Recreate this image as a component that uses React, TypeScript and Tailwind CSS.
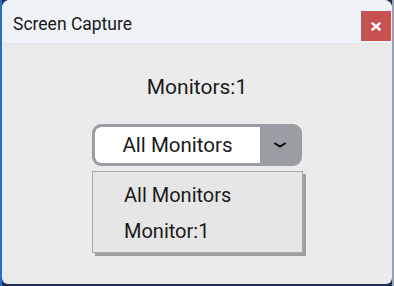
const font = { fontFamily: "Roboto, 'Noto Sans', sans-serif" };

export default function App() {
  return (
    <div
      className="w-[394px] h-[286px] bg-[#1f2f55] overflow-hidden"
      style={font}
    >
      <div className="flex h-full">
        <div className="w-[2px] bg-[#2d6cc2]" />
        <div className="w-[390px] h-[284px] rounded-t-[8px] rounded-b-[6px] bg-[#ebebeb] flex flex-col overflow-hidden">
          {/* title bar */}
          <div className="h-[44px] bg-[#eff2f7] flex justify-between pl-[11px] pr-[1px] border-b border-[#e4e6ea]">
            <span className="mt-[16px] text-[17.5px] text-[#1a1a1a] leading-none">Screen Capture</span>
            <button className="mt-[11px] w-[30px] h-[30px] bg-[#c75050] flex items-center justify-center">
              <svg width="10" height="9" viewBox="0 0 10 9" stroke="white" strokeWidth="2.4" strokeLinecap="square">
                <path d="M1.5 1.5 L8.5 7.5 M8.5 1.5 L1.5 7.5" />
              </svg>
            </button>
          </div>

          {/* body */}
          <div className="relative flex-1 flex flex-col items-center">
            <div className="mt-[33px] text-[21px] text-[#1a1a1a] leading-none">Monitors:1</div>

            <div className="mt-[26px] w-[210px] h-[42px] rounded-[9px] border-[3px] border-[#9a9ea4] bg-[#9a9ea4] flex overflow-hidden">
              <div className="w-[165px] bg-white rounded-l-[6px] flex items-center justify-center text-[20.5px] text-[#1a1a1a]">
                All Monitors
              </div>
              <div className="flex-1 flex items-center justify-center">
                <svg width="12" height="6" viewBox="0 0 12 6" fill="none" stroke="black" strokeWidth="2" strokeLinecap="round" strokeLinejoin="round">
                  <path d="M1 1.5 L6 4.5 L11 1.5" />
                </svg>
              </div>
            </div>

            <div className="absolute left-[90px] top-[127px] w-[211px] h-[82px] bg-[#e6e6e6] border border-[#a8a8a8] shadow-[3px_3px_0_#a0a0a0] flex flex-col pl-[31px] pt-[5px] text-[20px] text-[#1a1a1a]">
              <div className="h-[36px] flex items-center">All Monitors</div>
              <div className="h-[36px] flex items-center">Monitor:1</div>
            </div>
          </div>
        </div>
        <div className="flex-1 bg-[#8fa4b8]" />
      </div>
    </div>
  );
}
